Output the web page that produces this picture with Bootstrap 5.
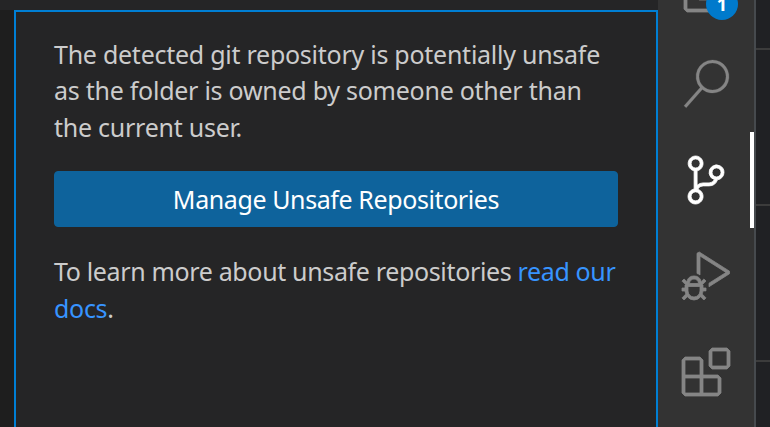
<!DOCTYPE html>
<html lang="en" data-bs-theme="dark">
<head>
<meta charset="utf-8">
<meta name="viewport" content="width=device-width, initial-scale=1">
<title>Source Control</title>
<link href="https://cdn.jsdelivr.net/npm/bootstrap@5.3.0/dist/css/bootstrap.min.css" rel="stylesheet">
<style>
body { background: #252526; font-family: "Noto Sans", "Open Sans", sans-serif; }
.side { min-width: 0; }
.strip { height: 10px; background: #252526; }
.gutter { width: 14px; background: #1e1e1e; }
.welcome { min-width: 0; border: 2px solid #007fd4; border-bottom: 0; background: #252526; padding: 24px 38px 0; color: #ccc; font-size: 25px; line-height: 36.4px; }
.welcome p, .btn-manage { white-space: nowrap; }
.welcome a { color: #3794ff; }
.btn-manage { --bs-btn-color: #fff; --bs-btn-bg: #0e639c; --bs-btn-border-color: #0e639c; --bs-btn-hover-bg: #1177bb; --bs-btn-hover-color: #fff; height: 56px; font-size: 25px; line-height: 36px; border-radius: 4px; }
.intro { height: 110px; margin-bottom: 25px; }
.more { margin-top: 26px; line-height: 36.5px; }
.l1, .l2 { letter-spacing: -.26px; }
.l3 { letter-spacing: -.25px; }
.l4 { letter-spacing: -.35px; }
.l5 { letter-spacing: -.3px; }
.lb { letter-spacing: -.4px; }
.activity { width: 98px; background: #333; border-right: 2px solid #464a4e; color: #858585; }
.act { height: 96px; }
.act svg { width: 48px; height: 48px; fill: currentColor; stroke: currentColor; stroke-width: .12; overflow: visible; }
.act .bold-icon { stroke-width: .4; }
.act-first { margin-top: -60px; }
.act-on { color: #fff; }
.act-on::after { content: ""; position: absolute; top: 0; right: 0; width: 4px; height: 96px; background: #fff; }
.count { left: 48px; top: 48px; width: 32px; height: 32px; background: #007acc; color: #fff; font: 700 18px/32px "Noto Sans", sans-serif; }
.editor { width: 14px; background: #202124; }
.rule-line { height: 156px; border-bottom: 2px solid #3c3c3c; }
.rule-first { height: 50px; }
</style>
</head>
<body>
<div class="d-flex vh-100 overflow-hidden">
  <div class="side d-flex flex-column flex-grow-1">
    <div class="strip flex-shrink-0"></div>
    <div class="d-flex flex-grow-1">
      <div class="gutter flex-shrink-0"></div>
      <main class="welcome flex-grow-1">
        <p class="intro"><span class="l1">The detected git repository is potentially unsafe</span><br><span class="l2">as the folder is owned by someone other than</span><br><span class="l3">the current user.</span></p>
        <button type="button" class="btn btn-manage w-100 d-flex align-items-center justify-content-center p-0"><span class="lb">Manage Unsafe Repositories</span></button>
        <p class="more mb-0"><span class="l4">To learn more about unsafe repositories <a class="text-decoration-none" href="#">read our</a></span><br><a class="l5 text-decoration-none" href="#">docs</a>.</p>
      </main>
    </div>
  </div>
  <nav class="activity d-flex flex-column flex-shrink-0" aria-label="Activity bar">
    <div class="act act-first position-relative d-flex flex-shrink-0 align-items-center justify-content-center">
      <svg class="bold-icon" viewBox="0 0 24 24"><path d="M17.5 0h-9L7 1.5V6H2.5L1 7.5v15.07L2.5 24h12.07L16 22.57V18h4.7l1.3-1.43V4.5L17.5 0zm0 2.12l2.38 2.38H17.5V2.12zm-3 20.38h-12v-15H7v9.07L8.5 18h6v4.5zm6-6h-12v-15H16V6h4.5v10.5z"/></svg>
      <span class="count position-absolute rounded-circle text-center">1</span>
    </div>
    <div class="act d-flex flex-shrink-0 align-items-center justify-content-center">
      <svg viewBox="0 0 24 24"><path d="M15.25 0a8.25 8.25 0 0 0-6.18 13.72L1 22.88l1.12 1 8.05-9.12A8.251 8.251 0 1 0 15.25.01V0zm0 15a6.75 6.75 0 1 1 0-13.5 6.75 6.75 0 0 1 0 13.5z"/></svg>
    </div>
    <div class="act act-on position-relative d-flex flex-shrink-0 align-items-center justify-content-center">
      <svg class="bold-icon" viewBox="0 0 24 24"><path d="M21.007 8.222A3.738 3.738 0 0 0 15.045 5.2a3.737 3.737 0 0 0 1.156 6.583 2.988 2.988 0 0 1-2.668 1.67h-2.99a4.456 4.456 0 0 0-2.989 1.165V7.4a3.737 3.737 0 1 0-1.494 0v9.117a3.776 3.776 0 1 0 1.816.099 2.99 2.99 0 0 1 2.668-1.667h2.99a4.484 4.484 0 0 0 4.223-3.039 3.736 3.736 0 0 0 3.25-3.687zM4.565 3.738a2.242 2.242 0 1 1 4.484 0 2.242 2.242 0 0 1-4.484 0zm4.484 16.441a2.242 2.242 0 1 1-4.484 0 2.242 2.242 0 0 1 4.484 0zm8.221-9.715a2.242 2.242 0 1 1 0-4.485 2.242 2.242 0 0 1 0 4.485z"/></svg>
    </div>
    <div class="act d-flex flex-shrink-0 align-items-center justify-content-center">
      <svg class="bold-icon" viewBox="0 0 24 24"><path d="M10.94 13.5l-1.32 1.32a3.73 3.73 0 0 0-7.24 0L1.06 13.5 0 14.56l1.72 1.72-.22.22V18H0v1.5h1.5v.08c.077.489.214.966.41 1.42L0 22.94 1.06 24l1.65-1.65A4.308 4.308 0 0 0 6 24a4.31 4.31 0 0 0 3.29-1.65L10.94 24 12 22.94 10.09 21c.198-.464.336-.951.41-1.45v-.1H12V18h-1.5v-1.5l-.22-.22L12 14.56l-1.06-1.06zM6 13.5a2.25 2.25 0 0 1 2.25 2.25h-4.5A2.25 2.25 0 0 1 6 13.5zm3 6a3.33 3.33 0 0 1-3 3 3.33 3.33 0 0 1-3-3v-2.25h6v2.25zm14.76-9.9v1.26L13.5 17.37V15.6l8.5-5.37L9 2v9.46a5.07 5.07 0 0 0-1.5-.72V.63L8.64 0l15.12 9.6z"/></svg>
    </div>
    <div class="act d-flex flex-shrink-0 align-items-center justify-content-center">
      <svg class="bold-icon" viewBox="0 0 24 24"><path d="M13.5 1.5L15 0h7.5L24 1.5V9l-1.5 1.5H15L13.5 9V1.5zm1.5 0V9h7.5V1.5H15zM0 15V6l1.5-1.5H9L10.5 6v7.5H18l1.5 1.5v7.5L18 24H1.5L0 22.5V15zm9-1.5V6H1.5v7.5H9zM9 15H1.5v7.5H9V15zm1.5 7.5H18V15h-7.5v7.5z"/></svg>
    </div>
  </nav>
  <div class="editor flex-shrink-0">
    <div class="rule-line rule-first"></div>
    <div class="rule-line"></div>
    <div class="rule-line"></div>
  </div>
</div>
<script src="https://cdn.jsdelivr.net/npm/bootstrap@5.3.0/dist/js/bootstrap.bundle.min.js"></script>
</body>
</html>
